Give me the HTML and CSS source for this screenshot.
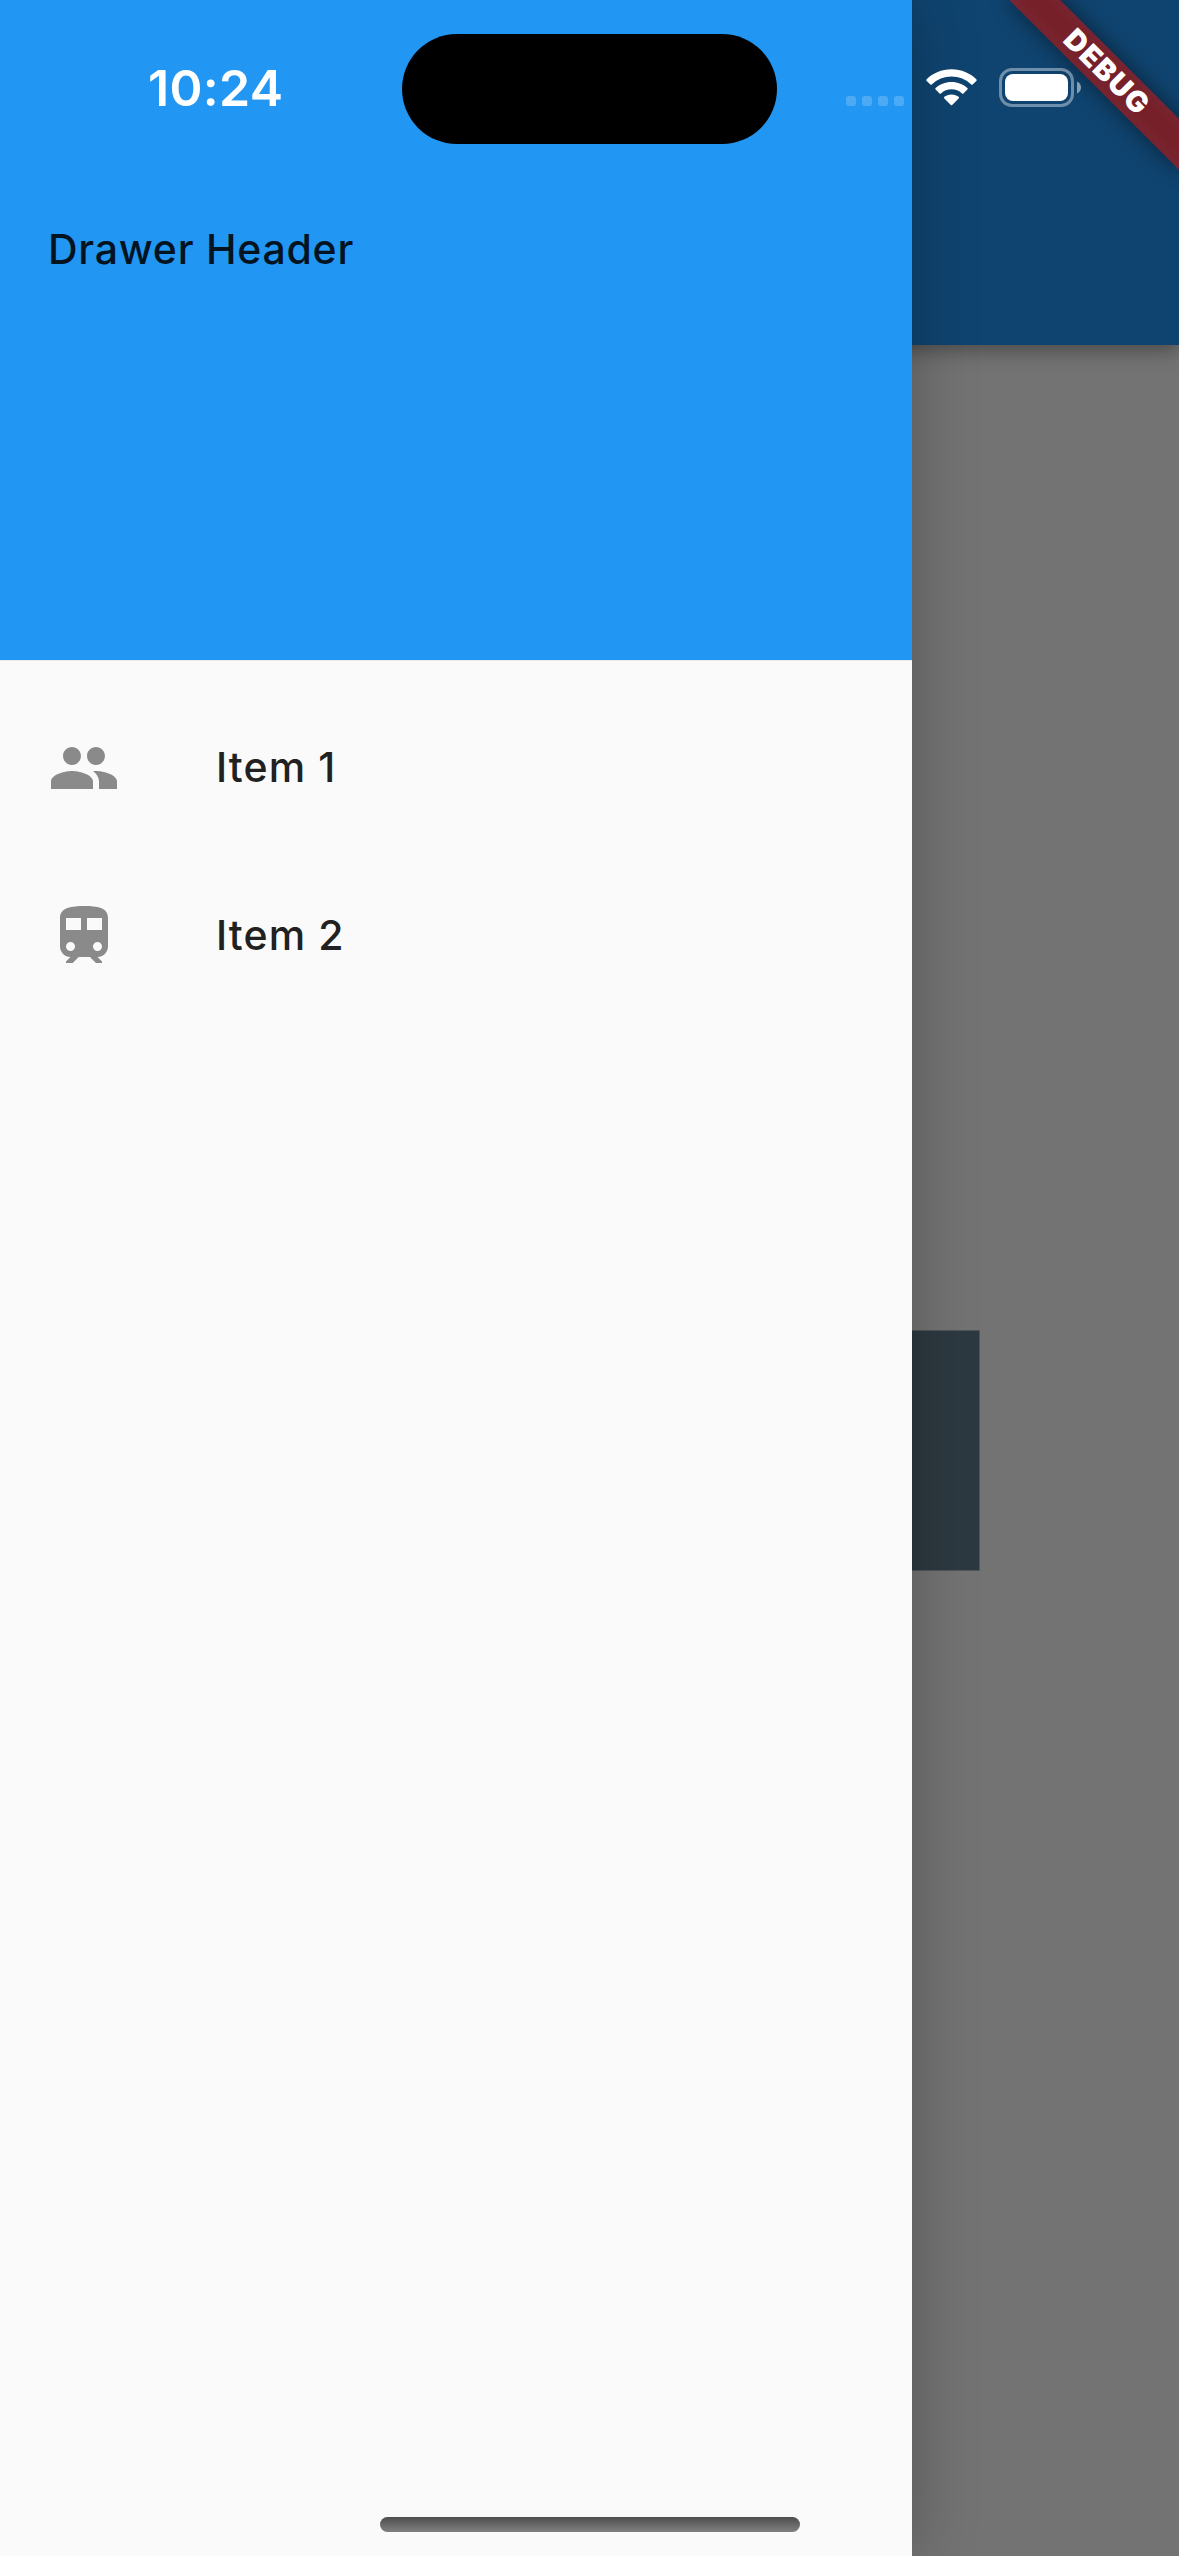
FILE: index.html
```html
<!DOCTYPE html>
<html lang="en">
<head>
<meta charset="utf-8">
<title>Drawer</title>
<link rel="stylesheet" href="styles.css">
</head>
<body>
<div class="screen">
  <div class="page">
    <header class="app-bar"></header>
    <main class="content"><div class="box"></div></main>
  </div>
  <aside class="drawer">
    <div class="drawer-header">Drawer Header</div>
    <nav class="list">
      <a class="tile">
        <svg class="tile-icon" viewBox="0 0 24 24"><path d="M16 11c1.66 0 2.99-1.34 2.99-3S17.66 5 16 5c-1.66 0-3 1.34-3 3s1.34 3 3 3zm-8 0c1.66 0 2.99-1.34 2.99-3S9.66 5 8 5C6.34 5 5 6.34 5 8s1.34 3 3 3zm0 2c-2.33 0-7 1.17-7 3.5V19h14v-2.5c0-2.33-4.67-3.5-7-3.5zm8 0c-.29 0-.62.02-.97.05 1.16.84 1.97 1.97 1.97 3.45V19h6v-2.5c0-2.33-4.67-3.5-7-3.5z"/></svg>
        <span>Item 1</span>
      </a>
      <a class="tile">
        <svg class="tile-icon" viewBox="0 0 24 24"><path fill-rule="evenodd" d="M12 2c-4 0-8 .5-8 4v9.500C4 17.430 5.570 19 7.500 19L6 20.500v.5h2.230l2-2H14l2 2h2v-.5L16.500 19c1.930 0 3.500-1.570 3.500-3.500V6c0-3.500-3.580-4-8-4zM7.500 17a1.500 1.500 0 1 1 0-3 1.500 1.500 0 0 1 0 3zM11 10H6V6h5zM18 10h-5V6h5zM16.500 17a1.500 1.500 0 1 1 0-3 1.500 1.500 0 0 1 0 3z"/></svg>
        <span>Item 2</span>
      </a>
    </nav>
  </aside>
  <div class="ribbon"><span>DEBUG</span></div>
  <div class="status-bar">
    <span class="time">10:24</span>
    <div class="island"></div>
    <div class="indicators">
      <div class="dots"><i></i><i></i><i></i><i></i></div>
      <svg class="wifi" viewBox="0 0 52 38"><path d="M26 0C36 0 45 4 51.300 10.200Q52 11 51.300 11.800L47.600 15.500Q46.900 16.100 46.200 15.500A29 29 0 0 0 5.800 15.500Q5.100 16.100 4.400 15.500L.7 11.800Q0 11 .7 10.200C7 4 16 0 26 0zM26 12.800C32.500 12.800 38 15.200 42.200 19.100Q42.900 19.900 42.200 20.600L38.200 24.500Q37.500 25.100 36.700 24.500A16 16 0 0 0 15.300 24.500Q14.500 25.100 13.800 24.500L9.800 20.600Q9.100 19.900 9.800 19.100C14 15.200 19.500 12.800 26 12.800zM26 25.500C29 25.500 31.500 26.500 33.300 28Q34 28.800 33.300 29.600L26.700 36.300Q26 37 25.300 36.300L18.700 29.600Q18 28.800 18.700 28C20.500 26.500 23 25.500 26 25.500z"/></svg>
      <svg class="battery" viewBox="0 0 83 39"><rect class="shell" x="1.500" y="1.500" width="72" height="36" rx="11.500"/><rect x="6" y="6" width="63" height="27" rx="8"/><path class="nub" d="M78 13.500c2.400 1 4 3.300 4 6s-1.600 5-4 6z"/></svg>
    </div>
  </div>
  <div class="home-bar"></div>
</div>
</body>
</html>
```
FILE: styles.css
```css
body {
  margin: 0;
  font-family: Inter, "Liberation Sans", sans-serif;
}

.screen {
  position: relative;
  width: 1179px;
  height: 2556px;
  overflow: hidden;
}

.page {
  display: flex;
  flex-direction: column;
  height: 100%;
  background: #737373;
}

.app-bar {
  position: relative;
  flex: none;
  height: 345px;
  background: #0f4470;
  box-shadow: 0 6px 12px -3px rgba(0, 0, 0, .2), 0 12px 15px rgba(0, 0, 0, .1), 0 3px 30px rgba(0, 0, 0, .09);
}

.content {
  flex: 1;
  display: flex;
  justify-content: center;
  padding-top: 985px;
}

.box {
  box-sizing: border-box;
  width: 781px;
  height: 241px;
  border: 1px solid #50565a;
  background: #2d3940;
}

.drawer {
  position: absolute;
  top: 0;
  left: 0;
  width: 912px;
  height: 100%;
  background: #fafafa;
  box-shadow: 0 0 60px rgba(0, 0, 0, .26);
}

.drawer-header {
  box-sizing: border-box;
  height: 661px;
  padding: 224px 48px 0;
  border-bottom: 1px solid #e6e8ea;
  background: #2196f3;
  color: #03131f;
  font-size: 41px;
  font-weight: 450;
  line-height: 50px;
  letter-spacing: .75px;
}

.list {
  padding-top: 23px;
}

.tile {
  display: flex;
  align-items: center;
  gap: 96px;
  height: 168px;
  padding: 0 48px;
  color: #212121;
  font-size: 41px;
  font-weight: 470;
  line-height: 50px;
  letter-spacing: 1.1px;
}

.tile span {
  padding-bottom: 2px;
}

.tile-icon {
  width: 72px;
  height: 72px;
  fill: #8a8a8a;
}

.ribbon {
  position: absolute;
  top: 0;
  left: 1059px;
  width: 240px;
  height: 120px;
  display: flex;
  align-items: flex-end;
  transform: rotate(45deg);
  transform-origin: 120px 0;
}

.ribbon::before {
  content: "";
  position: absolute;
  left: 0;
  right: 0;
  bottom: 0;
  height: 36px;
  background: rgba(0, 0, 0, .5);
  filter: blur(12px);
}

.ribbon span {
  position: relative;
  width: 100%;
  height: 36px;
  background: rgba(183, 28, 28, .63);
  color: #fff;
  font-size: 29px;
  font-weight: 900;
  line-height: 36px;
  letter-spacing: 1.3px;
  text-align: center;
}

.status-bar {
  position: absolute;
  top: 0;
  left: 0;
  width: 100%;
  height: 177px;
  display: grid;
  grid-template-columns: 402px 375px 1fr;
  align-items: start;
}

.time {
  padding: 58px 0 0 148px;
  color: #fff;
  font-size: 50px;
  font-weight: 580;
  line-height: 60px;
  letter-spacing: .3px;
}

.island {
  height: 110px;
  margin-top: 34px;
  border-radius: 55px;
  background: #000;
}

.indicators {
  display: flex;
  align-items: flex-start;
  padding: 68px 0 0 69px;
}

.dots {
  display: flex;
  gap: 6px;
  padding-top: 28px;
}

.dots i {
  width: 10px;
  height: 10px;
  border-radius: 3px;
  background: rgba(255, 255, 255, .2);
}

.wifi {
  width: 51px;
  height: 38px;
  margin: 1px 0 0 22px;
  fill: #fff;
}

.battery {
  width: 83px;
  height: 39px;
  margin-left: 22px;
  fill: #fff;
}

.shell {
  fill: none;
  stroke: rgba(255, 255, 255, .4);
  stroke-width: 3;
}

.nub {
  fill: rgba(255, 255, 255, .5);
}

.home-bar {
  position: absolute;
  left: 380px;
  bottom: 24px;
  width: 420px;
  height: 15px;
  border-radius: 8px;
  background: linear-gradient(#4d4d4d, #808080);
}
```
